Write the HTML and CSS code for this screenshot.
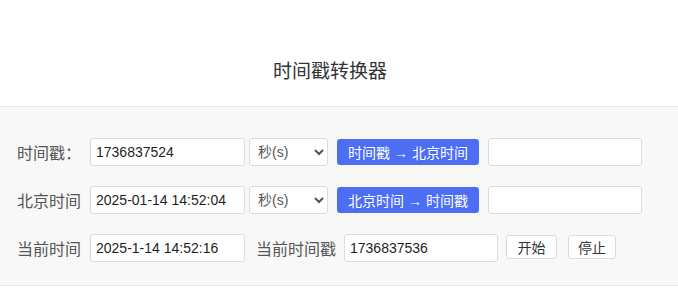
FILE: index.html
```html
<!DOCTYPE html>
<html lang="zh-CN">
<head>
<meta charset="utf-8">
<title>时间戳转换器</title>
<link rel="stylesheet" href="styles.css">
</head>
<body>
<header class="header">
  <h1 class="title">时间戳转换器</h1>
</header>
<main class="panel">
  <div class="row">
    <label class="label">时间戳：</label>
    <input class="input" type="text" value="1736837524">
    <select class="select"><option>秒(s)</option><option>毫秒(ms)</option></select>
    <button class="btn-primary">时间戳 → 北京时间</button>
    <input class="input out" type="text" value="">
  </div>
  <div class="row">
    <label class="label">北京时间</label>
    <input class="input" type="text" value="2025-01-14 14:52:04">
    <select class="select"><option>秒(s)</option><option>毫秒(ms)</option></select>
    <button class="btn-primary">北京时间 → 时间戳</button>
    <input class="input out" type="text" value="">
  </div>
  <div class="row">
    <label class="label">当前时间</label>
    <input class="input" type="text" value="2025-1-14 14:52:16">
    <label class="label label-now">当前时间戳</label>
    <input class="input now" type="text" value="1736837536">
    <button class="btn start">开始</button>
    <button class="btn stop">停止</button>
  </div>
</main>
</body>
</html>
```
FILE: styles.css
```css
* { box-sizing: border-box; }
html, body { margin: 0; padding: 0; background: #fff; }
body {
  font-family: "Liberation Sans", "Noto Sans CJK SC", sans-serif;
  color: #333;
  width: 678px;
  height: 306px;
  overflow: hidden;
}
.header {
  height: 107px;
  padding-top: 56px;
  padding-right: 18px;
  border-bottom: 1px solid #e6e6e6;
}
.title {
  margin: 0;
  font-family: "Noto Sans CJK SC", sans-serif;
  font-weight: normal;
  font-size: 19px;
  line-height: 28px;
  text-align: center;
  color: #333;
}
.panel {
  background: #f8f8f8;
  border-bottom: 1px solid #e6e6e6;
  padding: 31px 0 23px 17px;
  display: flex;
  flex-direction: column;
  gap: 20px;
}
.row {
  display: flex;
  align-items: center;
  height: 28px;
}
.label {
  font-family: "Noto Sans CJK SC", sans-serif;
  font-size: 16px;
  color: #555;
  width: 64px;
  margin-right: 9px;
  white-space: nowrap;
  line-height: 28px;
}
.input {
  width: 155px;
  height: 28px;
  border: 1px solid #dcdcdc;
  border-radius: 3px;
  background: #fff;
  padding: 0 5px;
  font-family: "Liberation Sans", sans-serif;
  font-size: 14px;
  color: #1e1e1e;
  outline: none;
}
.select {
  width: 79px;
  height: 28px;
  margin-left: 4px;
  border: 1px solid #dcdcdc;
  border-radius: 3px;
  background: #fff;
  font-family: "Liberation Sans", "Noto Sans CJK SC", sans-serif;
  font-size: 14px;
  color: #555;
  padding: 0 4px;
}
.btn-primary {
  margin-left: 9px;
  width: 142px;
  height: 26px;
  border: none;
  border-radius: 3px;
  background: #4b6ef2;
  color: #fff;
  font-family: "Liberation Sans", "Noto Sans CJK SC", sans-serif;
  font-size: 14px;
  padding: 0;
}
.out { margin-left: 9px; width: 154px; }
.label-now { margin-left: 11px; width: 80px; margin-right: 8px; }
.now { width: 154px; }
.btn {
  height: 24px;
  border: 1px solid #dcdcdc;
  border-radius: 3px;
  background: #fff;
  color: #333;
  font-family: "Noto Sans CJK SC", sans-serif;
  font-size: 14px;
  padding: 0;
  margin-top: -2px;
}
.start { margin-left: 8px; width: 51px; }
.stop { margin-left: 11px; width: 48px; }
```
